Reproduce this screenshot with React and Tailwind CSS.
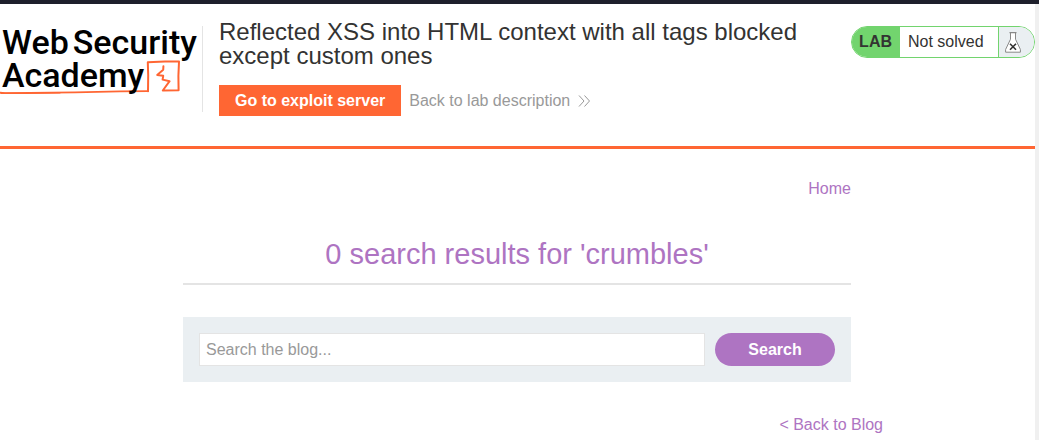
import React from "react";

function Logo() {
  return (
    <a
      href="#academy"
      aria-label="Web Security Academy"
      className="relative block w-[202px] shrink-0 pl-[2px] font-['Roboto',sans-serif] text-[34px] font-medium leading-[33px] text-black"
    >
      <svg
        aria-hidden="true"
        className="absolute left-0 top-[34px]"
        width="202"
        height="40"
        viewBox="0 60 202 40"
        fill="none"
        stroke="#ff6633"
        strokeLinecap="round"
        strokeLinejoin="round"
      >
        <path d="M0 92.6 L5 93.2 L30 92.8 L75 92.3 L120 91.4 L148 91.2" strokeWidth="1.8" />
        <path d="M1 93.2 L25 93.3 L60 92.8" strokeWidth="1.4" />
        <path d="M148 91.2 L148.2 75 L147.8 62.3 L165 61.6 L179 61.6 L178.4 76 L178.6 90.3 L162.8 90.5 L169.6 81.2 L162.6 79.6 L163.2 75.8 L157.2 74.9 L163.2 69.8 L163.4 66.2" strokeWidth="2" />
      </svg>
      <span className="relative flex gap-1">
        <span>Web</span>
        <span>Security</span>
      </span>
      <span className="relative block">Academy</span>
    </a>
  );
}

function LabStatus() {
  return (
    <div className="mt-[6px] flex h-8 shrink-0 overflow-hidden rounded-full border border-[#72d46e] bg-white text-base leading-[30px] text-[#333332]">
      <span className="bg-[#72d46e] pl-[7px] pr-2 font-bold">LAB</span>
      <span className="w-[98px] pl-2">Not solved</span>
      <span className="flex w-9 items-center border-l border-[#72d46e] bg-[#eaeff2] pl-[6px]">
        <svg width="16" height="21" viewBox="0 0 16 21" fill="none" aria-hidden="true">
          <path
            d="M5.5 1 V7.2 L0.6 17.5 V20.2 H15.4 V17.5 L10.5 7.2 V1"
            fill="#ffffff"
            stroke="#888888"
            strokeWidth="1"
          />
          <path d="M4.5 0.7 H11.5" stroke="#888888" strokeWidth="1.2" />
          <path d="M5 11.7 L11 17.7 M11 11.7 L5 17.7" stroke="#333332" strokeWidth="1.6" />
        </svg>
      </span>
    </div>
  );
}

function Header() {
  return (
    <header className="flex border-b-[3px] border-[#ff6633] pb-[30px] pt-4">
      <div className="mt-[6px] flex h-[86px] shrink-0 border-r border-[#e4e4e4]">
        <Logo />
      </div>
      <div className="min-w-0 flex-1 pl-4 pr-8">
        <h2 className="text-2xl leading-6 text-[#333332]">
          Reflected XSS into HTML context with all tags blocked except custom ones
        </h2>
        <div className="mt-[17px] flex items-center gap-2">
          <a href="#exploit" className="bg-[#ff6633] px-4 text-base font-bold leading-[31px] text-white">
            Go to exploit server
          </a>
          <a href="#lab" className="flex items-center gap-2 text-base text-[#999999]">
            Back to lab description
            <svg width="13" height="12" viewBox="0 0 13 12" fill="none" stroke="#999999" aria-hidden="true">
              <path d="M1 0.5 L6 6 L1 11.5 M6.5 0.5 L11.5 6 L6.5 11.5" />
            </svg>
          </a>
        </div>
      </div>
      <LabStatus />
    </header>
  );
}

export default function App() {
  return (
    <div className="min-h-screen border-t-4 border-[#1e1f2c] bg-white font-['Liberation_Sans',Arial,sans-serif]">
      <div className="min-h-[calc(100vh-4px)] border-r-4 border-[#f0f0f0]">
        <Header />
        <main className="mx-auto max-w-[669px] pr-px pt-7 text-base leading-6 text-[#ae74c2]">
          <nav className="text-right">
            <a href="#home">Home</a>
          </nav>
          <h1 className="mt-[35px] border-b-2 border-[#e4e4e4] pb-[11px] text-center text-[29px] leading-9">
            0 search results for 'crumbles'
          </h1>
          <form
            className="mt-8 flex gap-[10px] bg-[#eaeff2] p-4"
            onSubmit={(event) => event.preventDefault()}
          >
            <input
              type="text"
              aria-label="Search the blog"
              placeholder="Search the blog..."
              className="h-[33px] min-w-0 flex-1 border border-[#e4e4e4] bg-white px-[6px] text-base text-[#333332] placeholder:text-[#999999] focus:outline-none"
            />
            <button type="submit" className="h-[33px] w-[120px] rounded-full bg-[#ae74c2] font-bold text-white">
              Search
            </button>
          </form>
          <div className="-mr-8 mt-[31px] text-right">
            <a href="#blog">&lt; Back to Blog</a>
          </div>
        </main>
      </div>
    </div>
  );
}
